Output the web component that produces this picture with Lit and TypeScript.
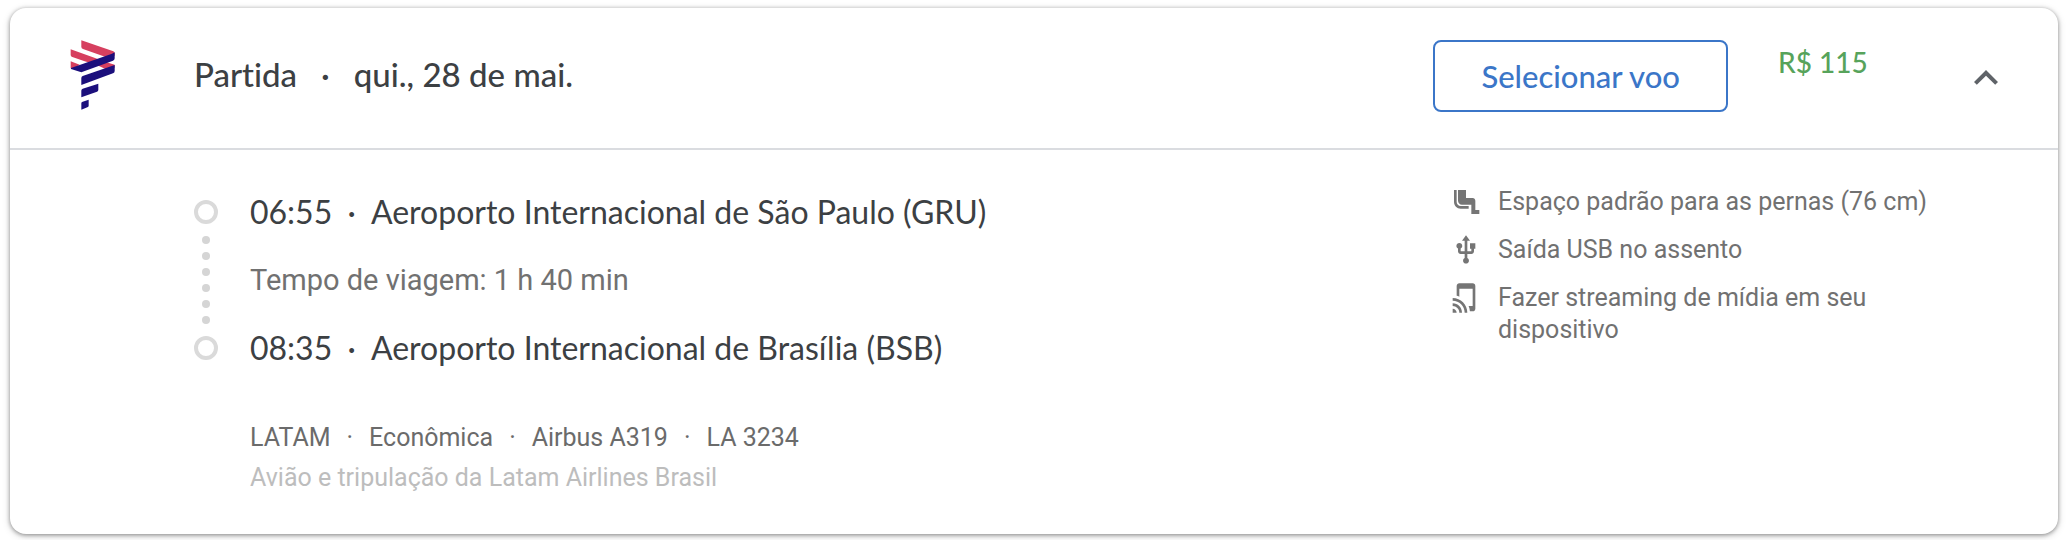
import { LitElement, html, css, svg } from "lit";
import { customElement, property, state } from "lit/decorators.js";

const seatIcon = svg`<path d="M5 12V3H3v9c0 2.76 2.24 5 5 5h6v-2H8c-1.66 0-3-1.34-3-3zm15.5 6H19v-7c0-1.1-.9-2-2-2h-5V3H6v8c0 1.65 1.35 3 3 3h7v7h6v-3z"/>`;
const usbIcon = svg`<path d="M15 7v4h1v2h-3V5h2l-3-4-3 4h2v8H8v-2.07c.7-.37 1.2-1.08 1.2-1.93 0-1.21-.99-2.2-2.2-2.2-1.21 0-2.2.99-2.2 2.2 0 .85.5 1.56 1.2 1.93V13c0 1.11.89 2 2 2h3v3.05c-.71.37-1.2 1.1-1.2 1.95 0 1.22.99 2.2 2.2 2.2 1.21 0 2.2-.98 2.2-2.2 0-.85-.49-1.58-1.2-1.95V15h3c1.11 0 2-.89 2-2v-2h1V7h-4z"/>`;
const streamIcon = svg`<path d="M2 16v2c2.76 0 5 2.24 5 5h2c0-3.87-3.13-7-7-7zm0 4v3h3c0-1.66-1.34-3-3-3zm0-8v2c4.97 0 9 4.03 9 9h2c0-6.08-4.92-11-11-11zM17 1.01L7 1c-1.1 0-2 .9-2 2v7.37c.69.16 1.36.37 2 .64V5h10v13h-3.03c.52 1.25.84 2.59.95 4H17c1.1 0 2-.9 2-2V3c0-1.1-.9-1.99-2-1.99z"/>`;

const amenities = [
  { icon: seatIcon, label: "Espaço padrão para as pernas (76 cm)" },
  { icon: usbIcon, label: "Saída USB no assento" },
  { icon: streamIcon, label: "Fazer streaming de mídia em seu dispositivo" },
];

const flightFacts = ["LATAM", "Econômica", "Airbus A319", "LA 3234"];

@customElement("airline-logo")
export class AirlineLogo extends LitElement {
  static styles = css`
    :host { display: block; }
    .logo { display: block; width: 46px; height: 70px; }
    .coral { fill: #d63f5f; }
    .indigo { fill: #1b0f7c; }
  `;
  render() {
    return html`<svg class="logo" viewBox="211 119 138 210" role="img" aria-label="LATAM">
      <path class="coral" d="M245 120L341 153Q345 155 345 159V166L316 169L250 146Q245 144 245 139Z"/>
      <path class="coral" d="M213 147L284 172L316 184L345 193V202L322 208L290 193L255 183L218 170Q213 168 213 164Z"/>
      <path class="coral" d="M213 183L240 193L226 204L213 204Z"/>
      <path class="indigo" d="M345 156V174Q345 179 340 181L245 216L214 206V203L337 160Z"/>
      <path class="indigo" d="M345 194V212Q345 217 340 219L245 254V233Q245 229 249 227Z"/>
      <path class="indigo" d="M296 250V268Q296 272 292 274L245 291V271Q245 267 249 265Z"/>
      <path class="indigo" d="M267 298V316Q267 320 263 321L245 328V309Q245 305 249 304Z"/>
    </svg>`;
  }
}

@customElement("flight-stop")
export class FlightStop extends LitElement {
  @property() time = "";
  @property() airport = "";
  static styles = css`
    :host {
      display: block;
      font: 400 32px/40px Lato, "Open Sans", sans-serif;
      font-variant-ligatures: none;
      color: #3c4043;
    }
    .dot { margin: 0 7px; }
  `;
  render() {
    return html`<time>${this.time}</time><span class="dot"> · </span><span>${this.airport}</span>`;
  }
}

@customElement("app-root")
export class AppRoot extends LitElement {
  @state() private open = true;

  static styles = css`
    :host {
      display: block;
      padding: 8px 10px 6px;
      background: #fff;
      color: #717171;
      font-family: Roboto, sans-serif;
    }
    * { box-sizing: border-box; }
    .card {
      border-radius: 16px;
      background: #fff;
      box-shadow: 0 1px 4px rgba(0, 0, 0, 0.4), 0 2px 8px rgba(0, 0, 0, 0.15);
    }
    .header {
      display: flex;
      align-items: flex-start;
      min-height: 142px;
      padding: 32px 48px 32px 60px;
      border-bottom: 2px solid #dadce0;
    }
    .brand { flex: none; width: 124px; }
    .title {
      flex: 1;
      display: flex;
      margin: 14px 0 0;
      font: 500 33px/40px Lato, "Open Sans", sans-serif;
      font-variant-ligatures: none;
      color: #3c4043;
    }
    .sep { margin: 0 24px; }
    .select {
      flex: none;
      height: 72px;
      padding: 0 46px;
      border: 2px solid #3b76c8;
      border-radius: 8px;
      background: #fff;
      color: #3b76c8;
      font: 500 31px/40px Lato, "Open Sans", sans-serif;
      cursor: pointer;
    }
    .price {
      flex: none;
      width: 184px;
      margin: 2px 0 0 50px;
      font: 500 28px/40px Lato, "Open Sans", sans-serif;
      color: #57a35b;
    }
    .toggle {
      flex: none;
      width: 48px;
      height: 48px;
      margin-top: 14px;
      padding: 0;
      border: 0;
      background: none;
      cursor: pointer;
    }
    .chevron { display: block; width: 48px; height: 48px; fill: #5f6368; }
    .body {
      display: flex;
      justify-content: space-between;
      padding: 36px 112px 36px 184px;
    }
    .route {
      display: grid;
      grid-template-columns: 24px auto;
      column-gap: 32px;
      padding-top: 6px;
    }
    .rail {
      display: flex;
      flex-direction: column;
      align-items: center;
      gap: 8px;
      padding-top: 8px;
    }
    .ring {
      width: 24px;
      height: 24px;
      border: 4px solid #dadada;
      border-radius: 50%;
    }
    .ring:first-child { margin-bottom: 4px; }
    .ring:last-child { margin-top: 4px; }
    .bead { width: 8px; height: 8px; border-radius: 50%; background: #d5d5d5; }
    .stops {
      display: flex;
      flex-direction: column;
      gap: 28px;
    }
    .duration { font-size: 29px; line-height: 40px; }
    .facts {
      grid-column: 2;
      display: flex;
      margin-top: 50px;
      font-size: 25px;
      line-height: 40px;
      color: #6b6b6b;
    }
    .fact-dot { margin: 0 16px; }
    .operator { grid-column: 2; font-size: 25px; line-height: 40px; color: #bdbdbd; }
    .amenities {
      display: flex;
      flex-direction: column;
      gap: 16px;
      width: 496px;
      margin: 0;
      padding: 0;
      list-style: none;
      font-size: 25px;
      line-height: 32px;
    }
    .amenity { display: flex; gap: 16px; }
    .amenity-label { max-width: 436px; }
    .icon { flex: none; width: 32px; height: 32px; fill: #757575; }
  `;

  private toggle() {
    this.open = !this.open;
  }

  render() {
    return html`<article class="card">
      <header class="header">
        <airline-logo class="brand"></airline-logo>
        <h2 class="title"><span>Partida</span><span class="sep">·</span><span>qui., 28 de mai.</span></h2>
        <button class="select" type="button">Selecionar voo</button>
        <div class="price">R$ 115</div>
        <button class="toggle" type="button" aria-label="Detalhes do voo" aria-expanded=${this.open} @click=${this.toggle}>
          <svg class="chevron" viewBox="0 0 24 24"><path d="M12 8l-6 6 1.41 1.41L12 10.83l4.59 4.58L18 14z"/></svg>
        </button>
      </header>
      ${this.open ? this.renderDetails() : ""}
    </article>`;
  }

  private renderDetails() {
    return html`<section class="body">
      <div class="route">
        <div class="rail">
          <span class="ring"></span>
          ${Array.from({ length: 6 }, () => html`<span class="bead"></span>`)}
          <span class="ring"></span>
        </div>
        <div class="stops">
          <flight-stop time="06:55" airport="Aeroporto Internacional de São Paulo (GRU)"></flight-stop>
          <div class="duration">Tempo de viagem: 1 h 40 min</div>
          <flight-stop time="08:35" airport="Aeroporto Internacional de Brasília (BSB)"></flight-stop>
        </div>
        <div class="facts">
          ${flightFacts.map((fact, i) => html`${i ? html`<span class="fact-dot">·</span>` : ""}<span>${fact}</span>`)}
        </div>
        <div class="operator">Avião e tripulação da Latam Airlines Brasil</div>
      </div>
      <ul class="amenities">
        ${amenities.map(
          (a) => html`<li class="amenity"><svg class="icon" viewBox="0 0 24 24" aria-hidden="true">${a.icon}</svg><span class="amenity-label">${a.label}</span></li>`
        )}
      </ul>
    </section>`;
  }
}
